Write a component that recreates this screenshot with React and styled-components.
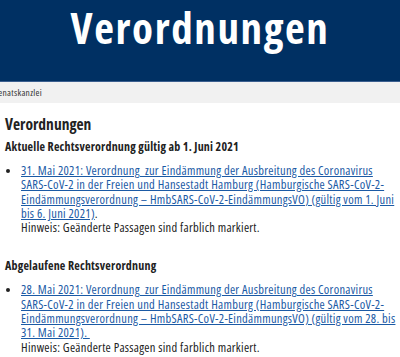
import React from 'react'
import styled, { createGlobalStyle } from 'styled-components'

const GlobalStyle = createGlobalStyle`
  html, body { margin: 0; padding: 0; background: #fff; }
  body {
    font-family: "Open Sans", Lato, sans-serif;
    font-stretch: 75%;
    letter-spacing: 0.28px;
    color: #222;
    overflow: hidden;
  }
`

const Header = styled.header`
  height: 81px;
  background: #003063;
  border-bottom: 1px solid #3b5f8f;
  display: flex;
  justify-content: center;
`

const Title = styled.h1`
  margin: 0;
  padding-top: 3px;
  color: #fff;
  font-weight: 700;
  font-size: 43px;
  line-height: 50px;
  letter-spacing: 1.6px;
`

const Breadcrumb = styled.nav`
  height: 21px;
  background: #f1f1f1;
  display: flex;
  align-items: center;
  font-size: 9.5px;
  letter-spacing: 0.3px;
  color: #333;
  margin-left: -6px;
`

const Content = styled.main`
  padding: 11px 0 0 5px;
`

const PageHeading = styled.h2`
  margin: 0 0 5px;
  font-size: 15.5px;
  font-weight: 700;
  line-height: 20px;
  letter-spacing: 0;
  color: #222;
`

const SectionHeading = styled.h3`
  margin: 0 0 10px;
  font-size: 12px;
  font-weight: 700;
  line-height: 15px;
  letter-spacing: 0.2px;
`

const List = styled.ul`
  margin: 0;
  padding-left: 16px;
  list-style: disc;
`

const Item = styled.li`
  font-size: 12.5px;
  line-height: 14.3px;
`

const DocLink = styled.a`
  color: #1b5aa5;
  text-decoration: underline;
  text-underline-offset: 1px;
`

const Note = styled.p`
  margin: 0;
  padding-left: 16px;
  font-size: 12.5px;
  line-height: 14.3px;
  color: #222;
`

const Section = styled.section`
  margin-bottom: ${p => p.$after || 0}px;
`

const docs = [
  {
    heading: 'Aktuelle Rechtsverordnung gültig ab 1. Juni 2021',
    link: '31. Mai 2021: Verordnung\u00a0 zur Eindämmung der Ausbreitung des Coronavirus SARS-CoV-2 in der Freien und Hansestadt Hamburg (Hamburgische SARS-CoV-2-Eindämmungsverordnung – HmbSARS-CoV-2-EindämmungsVO) (gültig vom 1. Juni bis 6. Juni 2021)',
    tail: '.',
    after: 23
  },
  {
    heading: 'Abgelaufene Rechtsverordnung',
    link: '28. Mai 2021: Verordnung\u00a0 zur Eindämmung der Ausbreitung des Coronavirus SARS-CoV-2 in der Freien und Hansestadt Hamburg (Hamburgische SARS-CoV-2-Eindämmungsverordnung – HmbSARS-CoV-2-EindämmungsVO) (gültig vom 28. bis 31. Mai 2021).\u00a0',
    tail: '',
    after: 0
  }
]

export default function App() {
  return (
    <>
      <GlobalStyle />
      <Header>
        <Title>Verordnungen</Title>
      </Header>
      <Breadcrumb>Senatskanzlei</Breadcrumb>
      <Content>
        <PageHeading>Verordnungen</PageHeading>
        {docs.map(d => (
          <Section key={d.heading} $after={d.after}>
            <SectionHeading>{d.heading}</SectionHeading>
            <List>
              <Item>
                <DocLink href="#">{d.link}</DocLink>{d.tail}
              </Item>
            </List>
            <Note>Hinweis: Geänderte Passagen sind farblich markiert.</Note>
          </Section>
        ))}
      </Content>
    </>
  )
}
